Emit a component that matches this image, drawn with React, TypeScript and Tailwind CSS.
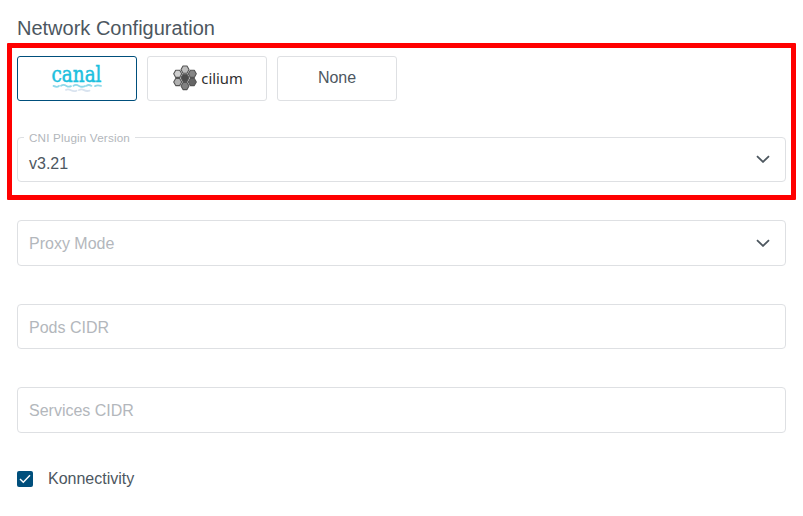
import React from "react";

function CanalLogo() {
  return (
    <svg width="54" height="40" viewBox="0 -2 54 40" className="mt-0 overflow-visible">
      <text
        x="1.500"
        y="21"
        textLength="50"
        lengthAdjust="spacingAndGlyphs"
        fill="#1cc0de"
        stroke="#1cc0de"
        strokeWidth="0.5"
        className="font-['DejaVu_Serif',serif] text-[21.500px]"
      >
        canal
      </text>
      <g fill="none" strokeWidth="1.800" strokeLinecap="round">
        <path
          stroke="#8fd9ea"
          d="M3.500 24.900c2 1 4.500 1 5.500 0M11 24.700c2-1.300 4-.7 5.500.2s3 1 4.500.2M23.500 24.700c2-1.300 4-.7 5.500.2s4 1 6 .2M36.500 24.700c2-1.300 3.500-.7 5 .2M45 25.100c2-1.100 3.500-1 6-.2"
        />
        <path
          stroke="#d9e3ef"
          d="M16 28.800c2-.8 3.500-.3 5 .5s3.500 1.300 5.500.4M29 29c2-1 3.500-.7 5 .1s3.500 1.200 5.500.5"
        />
      </g>
    </svg>
  );
}

const cells = [
  { x: 12, y: 4.6, fill: "#bdbdbd" },
  { x: 4.7, y: 8.8, fill: "#cfcfcf" },
  { x: 19.3, y: 8.8, fill: "#858585" },
  { x: 12, y: 12.8, fill: "#4c4c4c" },
  { x: 4.7, y: 17, fill: "#b0b0b0" },
  { x: 19.3, y: 17, fill: "#656565" },
  { x: 12, y: 21, fill: "#828282" },
];

function CiliumLogo() {
  return (
    <svg width="72" height="26" viewBox="0 0 72 26" className="-mt-[2px] ml-[3px]">
      {cells.map((c) => (
        <path
          key={`${c.x}-${c.y}`}
          transform={`translate(${c.x} ${c.y})`}
          d="M-2-3.600H2L4 0 2 3.600H-2L-4 0Z"
          fill={c.fill}
          stroke="#555555"
          strokeWidth="1.1"
          strokeLinejoin="round"
        />
      ))}
      <text
        x="28.3"
        y="19"
        textLength="41.5"
        lengthAdjust="spacingAndGlyphs"
        fill="#303030"
        className="font-['Noto_Sans',sans-serif] text-[15px]"
      >
        cilium
      </text>
    </svg>
  );
}

function Chevron() {
  return (
    <svg width="14" height="8" viewBox="0 0 14 8" fill="none" className="mr-[15px]">
      <path d="M1 1.200l6 5.700L13 1.200" stroke="#4d575f" strokeWidth="1.8" />
    </svg>
  );
}

function PluginButton({ selected = false, children }: { selected?: boolean; children: React.ReactNode }) {
  return (
    <button
      className={`flex h-[45px] w-[120px] items-center justify-center rounded-[3px] border bg-white ${
        selected ? "border-[#004f7c]" : "border-[#dee0e3]"
      }`}
    >
      {children}
    </button>
  );
}

function Field({ label, className, children }: { label: string; className: string; children?: React.ReactNode }) {
  return (
    <div
      className={`flex w-[769px] items-center justify-between rounded-[4px] border border-[#dee0e3] pl-[11px] text-[#b3b7bc] ${className}`}
    >
      <span className="pt-[2px]">{label}</span>
      {children}
    </div>
  );
}

export default function App() {
  return (
    <main className="h-[516px] w-[803px] overflow-hidden bg-white font-['Liberation_Sans',Arial,sans-serif] text-base text-[#4d575f]">
      <h2 className="h-[43px] pt-[14px] pl-[17px] text-[20px] leading-[28px]">Network Configuration</h2>

      <section className="ml-[7px] h-[157px] w-[789px] rounded-[1px] border-[5px] border-[#ff0000] pt-2 pl-[5px]">
        <div className="flex gap-[10px]">
          <PluginButton selected>
            <CanalLogo />
          </PluginButton>
          <PluginButton>
            <CiliumLogo />
          </PluginButton>
          <PluginButton>
            <span className="-mt-0.5">None</span>
          </PluginButton>
        </div>

        <fieldset className="mt-[29px] flex h-[52px] w-[769px] rounded-[4px] border border-[#dee0e3] pl-[6px]">
          <legend className="h-[14px] px-[5px] pt-px text-[11.7px] leading-[14px] tracking-[0.16px] text-[#b3b7bc]">
            CNI Plugin Version
          </legend>
          <div className="flex h-[38px] w-full items-center justify-between pl-[5px]">
            <span className="pt-[1px]">v3.21</span>
            <span className="-mt-[8px]">
              <Chevron />
            </span>
          </div>
        </fieldset>
      </section>

      <div className="pl-[17px]">
        <Field label="Proxy Mode" className="mt-5 h-[46px]">
          <Chevron />
        </Field>
        <Field label="Pods CIDR" className="mt-[38px] h-[45px]" />
        <Field label="Services CIDR" className="mt-[38px] h-[46px]" />
        <label className="mt-[34px] flex h-6 items-center">
          <span className="flex size-4 items-center justify-center rounded-[2px] bg-[#004f7c]">
            <svg width="12" height="10" viewBox="0 0 12 10" fill="none">
              <path d="M1 5l3.300 3.300L11 1.200" stroke="white" strokeWidth="1.4" />
            </svg>
          </span>
          <span className="ml-[15px]">Konnectivity</span>
        </label>
      </div>
    </main>
  );
}
